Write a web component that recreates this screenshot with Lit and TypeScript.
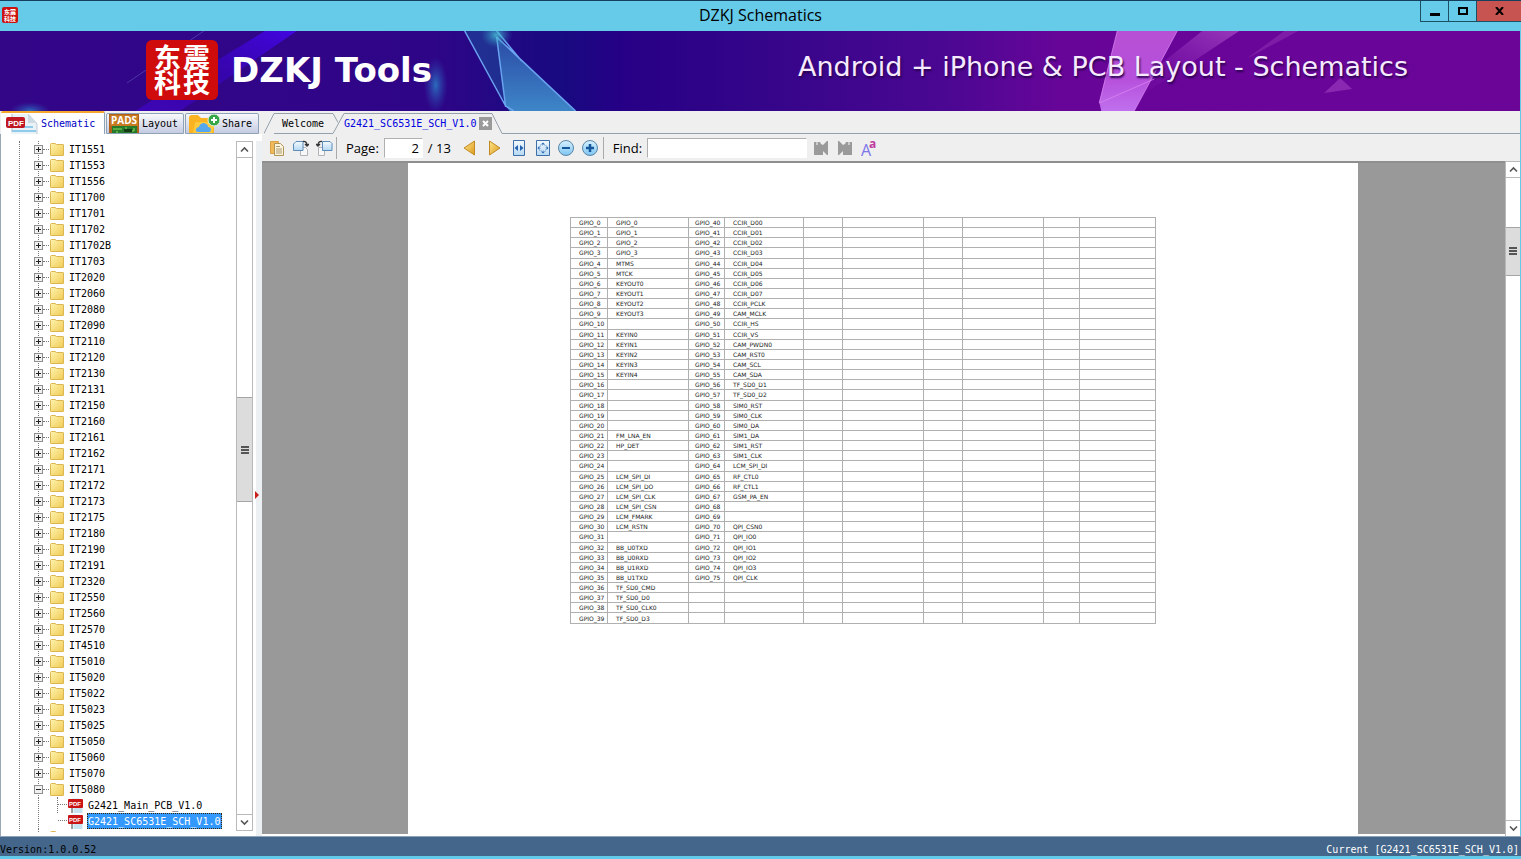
import { LitElement, html, svg, css, nothing } from "lit";
import { customElement, state } from "lit/decorators.js";
import { classMap } from "lit/directives/class-map.js";

const MODELS = [
  "IT1551", "IT1553", "IT1556", "IT1700", "IT1701", "IT1702", "IT1702B", "IT1703", "IT2020", "IT2060",
  "IT2080", "IT2090", "IT2110", "IT2120", "IT2130", "IT2131", "IT2150", "IT2160", "IT2161", "IT2162",
  "IT2171", "IT2172", "IT2173", "IT2175", "IT2180", "IT2190", "IT2191", "IT2320", "IT2550", "IT2560",
  "IT2570", "IT4510", "IT5010", "IT5020", "IT5022", "IT5023", "IT5025", "IT5050", "IT5060", "IT5070",
  "IT5080", "",
];
const OPEN_MODEL = "IT5080";
const FILES = ["G2421_Main_PCB_V1.0", "G2421_SC6531E_SCH_V1.0"];

const LEFT = [
  "GPIO_0", "GPIO_1", "GPIO_2", "GPIO_3", "MTMS", "MTCK", "KEYOUT0", "KEYOUT1", "KEYOUT2", "KEYOUT3",
  "", "KEYIN0", "KEYIN1", "KEYIN2", "KEYIN3", "KEYIN4", "", "", "", "",
  "", "FM_LNA_EN", "HP_DET", "", "", "LCM_SPI_DI", "LCM_SPI_DO", "LCM_SPI_CLK", "LCM_SPI_CSN", "LCM_FMARK",
  "LCM_RSTN", "", "BB_U0TXD", "BB_U0RXD", "BB_U1RXD", "BB_U1TXD", "TF_SD0_CMD", "TF_SD0_D0", "TF_SD0_CLK0", "TF_SD0_D3",
];
const RIGHT = [
  "CCIR_D00", "CCIR_D01", "CCIR_D02", "CCIR_D03", "CCIR_D04", "CCIR_D05", "CCIR_D06", "CCIR_D07", "CCIR_PCLK", "CAM_MCLK",
  "CCIR_HS", "CCIR_VS", "CAM_PWDN0", "CAM_RST0", "CAM_SCL", "CAM_SDA", "TF_SD0_D1", "TF_SD0_D2", "SIM0_RST", "SIM0_CLK",
  "SIM0_DA", "SIM1_DA", "SIM1_RST", "SIM1_CLK", "LCM_SPI_DI", "RF_CTL0", "RF_CTL1", "GSM_PA_EN", "", "",
  "QPI_CSN0", "QPI_IO0", "QPI_IO1", "QPI_IO2", "QPI_IO3", "QPI_CLK",
];

const folder = html`<svg width="14" height="13" viewBox="0 0 14 13">
  <defs><linearGradient id="f" x2="1" y2="1"><stop stop-color="#fff3b0"/><stop offset="1" stop-color="#f0cb55"/></linearGradient></defs>
  <path d="M.5 1.5Q.5.5 1.500.5H5l1.500 1h6.500q.5 0 .5.5v10q0 .5-.5.5H1q-.5 0-.5-.5z" fill="url(#f)" stroke="#dcb64e"/>
</svg>`;

const pdfSmall = html`<svg width="16" height="16" viewBox="0 0 16 16">
  <path d="M4 1h7l4 4v11H4z" fill="#e4f3f8"/><path d="M6 11h8M6 13h8M6 15h8" stroke="#a9d3e6"/>
  <path d="M4 10v6" stroke="#444"/>
  <rect x="0" y="2" width="15" height="9" rx="1" fill="#cb1414"/>
  <text x="1" y="9" font-family="Liberation Sans" font-size="6" font-weight="bold" fill="#fff">PDF</text>
</svg>`;

const pdfLarge = html`<svg width="32" height="21" viewBox="0 0 32 21">
  <path d="M5 1h18l8 9v11H5z" fill="#e9f2f6"/><path d="M22 1l9 10v10" fill="none" stroke="#bfc8d2"/>
  <path d="M22 1v9h9z" fill="#cfdbe3"/>
  <path d="M6 18h24M14 14h13" stroke="#8fcbe9" stroke-width="2"/>
  <path d="M6 1v18" stroke="#b8c4cc"/>
  <rect x="0" y="4" width="19" height="11" rx="2" fill="#c01722"/>
  <text x="2" y="13" font-family="Liberation Sans" font-size="8" font-weight="bold" fill="#fff">PDF</text>
</svg>`;

const pads = html`<svg width="30" height="19" viewBox="0 0 30 19">
  <rect width="30" height="19" fill="#b06018"/><rect x="1" y="1" width="28" height="11" fill="#c87a20"/>
  <rect x="3" y="12" width="25" height="7" fill="#267a2c"/>
  <path d="M4 15h9M17 13v4h8v-3M8 17v2" stroke="#8fdc5a" fill="none"/>
  <rect x="15" y="15" width="8" height="3" fill="#153a17"/>
  <text x="2" y="10" font-family="Open Sans" font-size="10" font-weight="bold" fill="#fff">PADS</text>
</svg>`;

const cloudFolder = html`<svg width="32" height="19" viewBox="0 0 32 19">
  <path d="M1 4q0-3 3-3h6l3 3h10q3 0 3 3v12H1z" fill="#fbb321"/>
  <path d="M5 19l2-10q0-1 2-1h18l-3 11z" fill="#ffca3c"/>
  <path d="M10 18q-3 0-2-3 1-2 3-2 1-4 5-4 4 1 4 4 3 0 3 3 0 2-2 2z" fill="#55a8ee"/>
  <circle cx="26" cy="6" r="6" fill="#36a648" stroke="#e4f3df"/><path d="M26 3v6M23 6h6" stroke="#fff" stroke-width="2"/>
</svg>`;

const chevron = (up: boolean) => html`<svg width="9" height="7" viewBox="0 0 9 7">
  <path d=${up ? "M1 5.500L4.500 2 8 5.500" : "M1 1.500L4.500 5 8 1.500"} fill="none" stroke="#555" stroke-width="1.600"/>
</svg>`;

const blueDefs = svg`<defs>
  <linearGradient id="b" x2="0" y2="1"><stop stop-color="#f4faff"/><stop offset="1" stop-color="#b5d8f3"/></linearGradient>
  <linearGradient id="c" x2="0" y2="1"><stop stop-color="#d8f1ff"/><stop offset="1" stop-color="#7cc4f2"/></linearGradient>
  <linearGradient id="g" x2="1" y2="1"><stop stop-color="#ffe68a"/><stop offset="1" stop-color="#dc9a1c"/></linearGradient>
</defs>`;

const TOOL_ICONS: Record<string, unknown> = {
  copy: svg`<path d="M2.500 1.500h8v12h-8z" fill="#f0b95a" stroke="#dca24a"/><path d="M6.500 3.500h6l3 3v9h-9z" fill="#fbf3dc" stroke="#ae9458"/>
    <path d="M8 6.500h4M8 9h6M8 11h6M8 13h6" stroke="#a99a70"/>`,
  rotateLeft: svg`<path d="M8.500 7.500h5l2 2v6h-7z" fill="#f7f7f7" stroke="#b0b4b8"/><path d="M4 1.500h7v9H1.500V4z" fill="url(#b)" stroke="#5c8cba"/>
    <path d="M11 1.500q4-.5 4 4M13 4l2 2 2-2" fill="none" stroke="#333" stroke-width="1.300"/>`,
  rotateRight: svg`<path d="M2.500 7.500h6v8h-6z" fill="#f7f7f7" stroke="#b0b4b8"/><path d="M6.500 1.500H14l2 2v7H6.500z" fill="url(#b)" stroke="#5c8cba"/>
    <path d="M6 1.500Q2 1 2 5.500M0 4l2 2 2-2" fill="none" stroke="#333" stroke-width="1.300"/>`,
  prev: svg`<path d="M13.500 1v14L3 8z" fill="url(#g)" stroke="#c08a24" stroke-linejoin="round"/>`,
  next: svg`<path d="M3.500 1v14L14 8z" fill="url(#g)" stroke="#c08a24" stroke-linejoin="round"/>`,
  fitWidth: svg`<path d="M3.500.5h11v15h-11z" fill="url(#b)" stroke="#3f6fa8"/><path d="M8 5v6L4.500 8zM10 5v6l3.500-3z" fill="#2361ad"/>`,
  fitPage: svg`<path d="M2.500.5h13v15h-13z" fill="url(#b)" stroke="#3f6fa8"/><path d="M7 4.500L9 2.500l2 2zM7 11.500l2 2 2-2zM5.500 6v4l-2-2zM12.500 6v4l2-2z" fill="#2361ad"/>
    <path d="M6 5h6v6H6z" fill="none" stroke="#7fa6d0" stroke-dasharray="1 1"/>`,
  zoomOut: svg`<circle cx="8" cy="8" r="7.500" fill="url(#c)" stroke="#5a86a8"/><path d="M4 8h8" stroke="#15579a" stroke-width="2"/>`,
  zoomIn: svg`<circle cx="8" cy="8" r="7.500" fill="url(#c)" stroke="#5a86a8"/><path d="M4 8h8M8 4v8" stroke="#15579a" stroke-width="2.500"/>`,
  findPrev: svg`<path d="M1 2h2l1 1 1-1h2l1 2 2 1 4-4h1v14h-1l-4-4v4H1z" fill="#9a9a9a"/><circle cx="4" cy="4" r="1" fill="#ddd"/>`,
  findNext: svg`<path d="M15 2h-2l-1 1-1-1H9L8 4 6 5 2 1H1v14h1l4-4v4h9z" fill="#9a9a9a"/><circle cx="12" cy="4" r="1" fill="#ddd"/>`,
  matchCase: svg`<text x="0" y="16" font-family="Open Sans" font-size="16" fill="#7d76e8">A</text>
    <text x="8" y="8" font-family="Open Sans" font-size="12" font-weight="bold" fill="#c03aa0">a</text>`,
};

@customElement("app-root")
export class AppRoot extends LitElement {
  @state() private selected = FILES[1];

  static styles = css`
    :host {
      display: flex; flex-direction: column; height: 100vh; box-sizing: border-box; overflow: hidden;
      border-top: 1px solid #153f5c; border-bottom: 3px solid #63c9e8; background: #efefef; color: #000;
      font: 10px/16px "DejaVu Sans Mono", "Liberation Mono", monospace;
    }
    * { box-sizing: border-box; }
    svg { display: block; flex: none; }
    button { font: inherit; color: inherit; background: none; border: 0; padding: 0; margin: 0; display: flex; align-items: center; }
    ul { list-style: none; margin: 0; padding: 0; }

    .titlebar { display: grid; grid-template-columns: 1fr auto 1fr; height: 30px; background: #66cae9; flex: none; }
    .titlebar h1 { margin: 0; font: 400 16px/28px "Open Sans", "Noto Sans", sans-serif; }
    .app-icon { margin: 6px 2px; }
    .window-buttons { display: flex; justify-content: flex-end; height: 21px; }
    .window-buttons button { width: 28px; justify-content: center; border: 1px solid #1d4f64; border-top: 0; border-right: 0; }
    .window-buttons .close { width: 45px; background: #c75450; }

    .banner { height: 80px; flex: none; display: grid; background: #36058a; overflow: hidden; border-right: 1px solid #66cae9; }
    .banner > * { grid-area: 1 / 1; }
    .art { width: 100%; height: 80px; }
    .banner-content { display: flex; align-items: center; justify-content: space-between; padding: 0 112px 2px 146px; color: #fff; z-index: 1; font-family: "DejaVu Sans", sans-serif; }
    .brand { display: flex; align-items: center; gap: 13px; font-size: 34px; line-height: 40px; font-weight: 700; }
    .tagline { margin: 0; padding-bottom: 6px; font-size: 27px; line-height: 32px; color: #f6eaff; text-shadow: 1px 2px 2px #2a0050; white-space: nowrap; }

    .workspace { display: flex; flex: 1; min-height: 0; border-right: 1px solid #66cae9; }
    .sidebar { width: 262px; flex: none; display: flex; flex-direction: column; }
    .side-tabs { display: flex; height: 23px; align-items: flex-end; gap: 1px; flex: none; padding-left: 1px; }
    .side-tabs button { height: 21px; gap: 3px; padding: 0 4px 0 2px; border: 1px solid #8fa3b8; border-radius: 2px 2px 0 0; background: linear-gradient(#f8f9fc, #c5cbe2); overflow: hidden; }
    .side-tabs .current { width: 104px; height: 23px; padding: 0 0 0 5px; color: #0000c8; background: #fff; border: 0; border-top: 2px solid #f5a62c; border-right: 1px solid #8fa3b8; }
    .side-tabs .layout { width: 78px; }
    .side-tabs .share { width: 74px; gap: 2px; }
    .side-body { display: flex; flex: 1; min-height: 0; border-left: 1px solid #9aa8b5; background: #fff; padding-top: 7px; }
    .tree { flex: 1; overflow: hidden; margin-bottom: 4px; padding-left: 18px; }
    .level { border-left: 1px dotted #777; padding-left: 14px; }
    .node { display: flex; align-items: center; height: 16px; }
    .stem { width: 9px; height: 16px; display: flex; align-items: center; background: repeating-linear-gradient(#777 0 1px, transparent 1px 2px) 4px 0 / 1px 100% no-repeat; }
    .stem button { width: 9px; height: 9px; border: 1px solid #8f8f8f; background: #f1f1f1; justify-content: center; }
    .dash { width: 6px; border-top: 1px dotted #777; margin-right: 1px; }
    .name { margin-left: 5px; height: 16px; padding-top: 2px; white-space: nowrap; }
    .files { margin-left: 4px; padding-left: 18px; border-left: 1px dotted #777; }
    .file { display: flex; align-items: center; height: 16px; }
    .file .corner { width: 11px; height: 16px; border-left: 1px dotted #777; background: repeating-linear-gradient(90deg, #777 0 1px, transparent 1px 2px) 0 7px / 100% 1px no-repeat; }
    .file:last-child .corner { border-left-color: transparent; }
    .file .name { margin-left: 3px; padding: 2px 1px 0 0; border: 1px solid transparent; }
    .file .selected { background: #3399ff; color: #fff; border: 1px dotted #3b2800; }
    .scroll { display: flex; flex-direction: column; flex: none; width: 17px; border: 1px solid #b9b9b9; background: #fff; }
    .scroll button { height: 16px; justify-content: center; flex: none; }
    .scroll button:first-child { border-bottom: 1px solid #b9b9b9; }
    .scroll button:last-child { border-top: 1px solid #b9b9b9; }
    .scroll .thumb { display: flex; flex-direction: column; gap: 1px; align-items: center; justify-content: center; background: #dcdcdc; border: solid #a5a5a5; border-width: 1px 0; }
    .thumb i { width: 8px; height: 2px; background: #555; }
    .track { flex: 1; display: grid; }
    .side-track { grid-template-rows: 240fr 105fr 313fr; }
    .view-track { grid-template-rows: 49fr 49fr 545fr; }
    .thumb { grid-row: 2; }
    .side-body .scroll { margin-bottom: 5px; }
    .splitter { width: 9px; background: linear-gradient(90deg, #fff 3px, #edf0f3 3px); flex: none; display: flex; padding: 349px 0 0 1px; }

    .main { flex: 1; min-width: 0; display: flex; flex-direction: column; }
    .doc-tabs { display: flex; height: 23px; flex: none; padding-left: 2px; }
    .doc-tabs .label { border-top: 1px solid #94a0ab; border-bottom: 1px solid #94a0ab; margin-top: 2px; display: flex; align-items: center; }
    .doc-tabs .welcome { width: 59px; padding-left: 8px; }
    .doc-tabs .active { color: #0000e0; border-bottom-color: transparent; gap: 3px; }
    .doc-tabs .rest { flex: 1; border-bottom: 1px solid #94a0ab; }
    .doc-tabs .shut { width: 13px; height: 13px; background: #9a9a9a; justify-content: center; }
    .toolbar { display: flex; align-items: center; height: 27px; flex: none; padding: 1px 0 0 2px; font: 13px/20px "Open Sans", "Noto Sans", sans-serif; }
    .toolbar .tool { width: 24px; height: 24px; justify-content: center; }
    .toolbar .wide { width: 26px; }
    .toolbar .rule { width: 1px; height: 22px; background: #aaa; }
    .toolbar label { margin-left: 9px; margin-right: 5px; }
    .toolbar input { height: 20px; font: inherit; border: 1px solid #b0b0b0; border-right-color: #fff; border-bottom-color: #fff; background: #fff; padding: 0; outline: 0; border-radius: 0; }
    .page-no { width: 39px; text-align: right; }
    .toolbar .page-no { padding-right: 3px; }
    .total { margin: 0 6px 0 5px; }
    .find { width: 160px; margin-right: 2px; }
    .viewer { display: flex; flex: 1; min-height: 0; }
    .canvas { flex: 1; display: flex; justify-content: center; padding-right: 1px; background: #999; border-top: 2px solid #8f8f8f; border-bottom: 2px solid #fff; overflow: hidden; }
    .paper { width: 950px; background: #fff; padding: 54px 162px; }
    .viewer .scroll { width: 15px; border-width: 1px 0 0 1px; }
    table { border-collapse: collapse; table-layout: fixed; width: 586px; height: 407px; font: 6px/8px "DejaVu Sans", sans-serif; color: #222; }
    td { border: 1px solid #b0b0b0; padding: 1px 0 0 8px; white-space: nowrap; }
    td.third { padding-left: 6px; }
    .c36 { width: 36px; } .c37 { width: 37px; } .c39 { width: 39px; } .c76 { width: 76px; } .c79 { width: 79px; } .c81 { width: 81px; }

    .status { display: flex; justify-content: space-between; align-items: flex-end; height: 20px; flex: none; background: #43668a; border-top: 1px solid #8da4b8; padding-right: 2px; line-height: 13px; }
    .status .right { color: #fff; }
  `;

  private tool(name: string, label: string, wide = false) {
    return html`<button class=${classMap({ tool: true, wide })} aria-label=${label}>
      <svg width="17" height="17" viewBox="0 0 17 17">${blueDefs}${TOOL_ICONS[name]}</svg>
    </button>`;
  }

  private scroll(track: string) {
    return html`<div class="scroll">
      <button aria-label="Scroll up">${chevron(true)}</button>
      <div class="track ${track}"><div class="thumb"><i></i><i></i><i></i></div></div>
      <button aria-label="Scroll down">${chevron(false)}</button>
    </div>`;
  }

  private renderNode(name: string) {
    const open = name === OPEN_MODEL;
    return html`<li>
      <div class="node">
        <span class="stem"><button aria-label="${open ? "Collapse" : "Expand"} ${name}">
          <svg width="7" height="7" viewBox="0 0 7 7"><path d=${open ? "M1 3.500h5" : "M1 3.500h5M3.500 1v5"} stroke="#222"/></svg>
        </button></span>
        <span class="dash"></span>${folder}${name ? html`<button class="name">${name}</button>` : nothing}
      </div>
      ${open ? html`<ul class="files">${FILES.map((f) => html`<li class="file">
        <span class="corner"></span>${pdfSmall}
        <button class=${classMap({ name: true, selected: f === this.selected })} @click=${() => (this.selected = f)}>${f}</button>
      </li>`)}</ul>` : nothing}
    </li>`;
  }

  private renderBanner() {
    return html`<header class="banner">
      <svg class="art" viewBox="0 0 1521 80" preserveAspectRatio="none" aria-hidden="true">
        <defs>
          <linearGradient id="bg"><stop stop-color="#330688"/><stop offset=".28" stop-color="#2f0587"/><stop offset=".37" stop-color="#180a80"/>
            <stop offset=".41" stop-color="#260086"/><stop offset=".5" stop-color="#340589"/><stop offset=".62" stop-color="#4a0792"/>
            <stop offset=".7" stop-color="#680599"/><stop offset="1" stop-color="#6a0598"/></linearGradient>
          <linearGradient id="band" x1="1" x2="0" y2="1"><stop stop-color="#4206e0"/><stop offset=".5" stop-color="#3a04c4" stop-opacity=".6"/><stop offset="1" stop-color="#4206c8" stop-opacity=".7"/></linearGradient>
          <linearGradient id="prism" x2="0" y2="1"><stop stop-color="#2a4aa6"/><stop offset="1" stop-color="#3e86c8"/></linearGradient>
          <linearGradient id="pink" x2="0" y2="1"><stop stop-color="#b850d4"/><stop offset=".6" stop-color="#b650dc"/><stop offset="1" stop-color="#c070ee"/></linearGradient>
          <linearGradient id="fade" x1="1" x2="0" y2="1"><stop stop-color="#a444c4"/><stop offset="1" stop-color="#7a10a8" stop-opacity="0"/></linearGradient>
          <radialGradient id="glow"><stop stop-color="#2a86c8" stop-opacity=".8"/><stop offset="1" stop-color="#2a50b8" stop-opacity="0"/></radialGradient>
          <radialGradient id="spark"><stop stop-color="#4cd0dc" stop-opacity=".8"/><stop offset="1" stop-color="#2a80b8" stop-opacity="0"/></radialGradient>
        </defs>
        <rect width="1521" height="80" fill="url(#bg)"/>
        <path d="M265 0h32L180 80h-45z" fill="url(#band)"/>
        <path d="M204 0L127 52" stroke="#5a58c0" stroke-opacity=".6"/>
        <ellipse cx="436" cy="54" rx="12" ry="28" fill="url(#glow)"/>
        <ellipse cx="30" cy="80" rx="20" ry="9" fill="url(#glow)"/>
        <path d="M465 0h30l2 6 10 69 3 5z" fill="#1f3f98" fill-opacity=".7"/>
        <path d="M497 6l79 74h-66l-4-5z" fill="url(#prism)"/>
        <path d="M465 0l41 75 8 5M497 6l9 70M497 6l79 74M497 0l25 30" fill="none" stroke="#6aa4f0" stroke-width="1.500"/>
        <ellipse cx="497" cy="4" rx="16" ry="13" fill="url(#spark)"/>
        <path d="M1203 0h37L1140 66l-20 0z" fill="url(#fade)" fill-opacity=".8"/>
        <path d="M1285 0h14l-52 28z" fill="#8c2ab0" fill-opacity=".6"/>
        <path d="M1118 0h60l-43 80h-33l-2-9z" fill="url(#pink)"/>
        <path d="M1178 0l-43 80M1118 0l-18 72 55-24" fill="none" stroke="#dd8af4" stroke-opacity=".7"/>
        <path d="M1325 62l16-15 12 11z" fill="#9a38bc" fill-opacity=".7"/>
      </svg>
      <div class="banner-content">
        <div class="brand">
          <svg width="72" height="60" viewBox="0 0 72 60">
            <rect width="72" height="60" rx="6" fill="#d00b0b"/>
            <g font-family="Noto Sans CJK SC" font-weight="700" font-size="27" fill="#fff">
              <text x="8 37" y="28">东震</text><text x="8 37" y="53">科技</text>
            </g>
          </svg>
          <span>DZKJ Tools</span>
        </div>
        <p class="tagline">Android + iPhone &amp; PCB Layout - Schematics</p>
      </div>
    </header>`;
  }

  render() {
    return html`
      <div class="titlebar">
        <svg class="app-icon" width="16" height="16" viewBox="0 0 16 16"><rect width="16" height="16" rx="2" fill="#cc1111"/>
          <g font-family="Noto Sans CJK SC" font-size="6" font-weight="700" fill="#fff"><text x="2 8" y="7">东震</text><text x="2 8" y="14">科技</text></g>
        </svg>
        <h1>DZKJ Schematics</h1>
        <div class="window-buttons">
          <button aria-label="Minimize"><svg width="10" height="9"><path d="M0 7.500h10" stroke="#000" stroke-width="3"/></svg></button>
          <button aria-label="Maximize"><svg width="10" height="8"><rect x="1" y="1" width="8" height="6" fill="none" stroke="#000" stroke-width="2"/></svg></button>
          <button class="close" aria-label="Close"><svg width="9" height="8"><path d="M1 0l7 8M8 0L1 8" stroke="#000" stroke-width="2"/></svg></button>
        </div>
      </div>
      ${this.renderBanner()}
      <div class="workspace">
        <aside class="sidebar">
          <div class="side-tabs">
            <button class="current">${pdfLarge}Schematic</button>
            <button class="layout">${pads}Layout</button>
            <button class="share">${cloudFolder}Share</button>
          </div>
          <div class="side-body">
            <nav class="tree"><ul class="level">${MODELS.map((m) => this.renderNode(m))}</ul></nav>
            ${this.scroll("side-track")}
            <div class="splitter"><svg width="6" height="10" viewBox="0 0 6 10"><path d="M1 1l4 4-4 4z" fill="#c81e1e"/></svg></div>
          </div>
        </aside>
        <main class="main">
          <div class="doc-tabs">
            <svg width="10" height="23"><path d="M0 22.500L10 2.500" stroke="#94a0ab"/></svg>
            <button class="label welcome">Welcome</button>
            <svg width="11" height="23"><path d="M0 2.500L5 11.500M0 22.500L11 2.500" stroke="#94a0ab" fill="none"/></svg>
            <div class="label active"><button>G2421_SC6531E_SCH_V1.0</button>
              <button class="shut" aria-label="Close tab"><svg width="7" height="7"><path d="M1 1l5 5M6 1L1 6" stroke="#fff" stroke-width="2"/></svg></button>
            </div>
            <svg width="10" height="23"><path d="M0 2.500L10 22.500" stroke="#94a0ab"/></svg>
            <div class="rest"></div>
          </div>
          <div class="toolbar">
            ${this.tool("copy", "Copy")}${this.tool("rotateLeft", "Rotate right")}${this.tool("rotateRight", "Rotate left")}
            <span class="rule"></span>
            <label for="page">Page:</label><input id="page" class="page-no" value="2" /><span class="total">/ 13</span>
            ${this.tool("prev", "Previous page", true)}${this.tool("next", "Next page")}
            ${this.tool("fitWidth", "Fit width")}${this.tool("fitPage", "Fit page")}${this.tool("zoomOut", "Zoom out")}${this.tool("zoomIn", "Zoom in")}
            <span class="rule"></span>
            <label for="find">Find:</label><input id="find" class="find" />
            ${this.tool("findPrev", "Find previous")}${this.tool("findNext", "Find next")}${this.tool("matchCase", "Match case")}
          </div>
          <div class="viewer">
            <div class="canvas"><div class="paper">
              <table>
                <colgroup><col class="c37"><col class="c81"><col class="c36"><col class="c79"><col class="c39"><col class="c81"><col class="c39"><col class="c81"><col class="c36"><col class="c76"></colgroup>
                <tbody>${LEFT.map((name, i) => html`<tr>
                  <td>GPIO_${i}</td><td>${name}</td>
                  <td class="third">${i < RIGHT.length ? `GPIO_${i + 40}` : ""}</td><td>${RIGHT[i] ?? ""}</td>
                  <td></td><td></td><td></td><td></td><td></td><td></td>
                </tr>`)}</tbody>
              </table>
            </div></div>
            ${this.scroll("view-track")}
          </div>
        </main>
      </div>
      <footer class="status"><span>Version:1.0.0.52</span><span class="right">Current [G2421_SC6531E_SCH_V1.0]</span></footer>
    `;
  }
}
